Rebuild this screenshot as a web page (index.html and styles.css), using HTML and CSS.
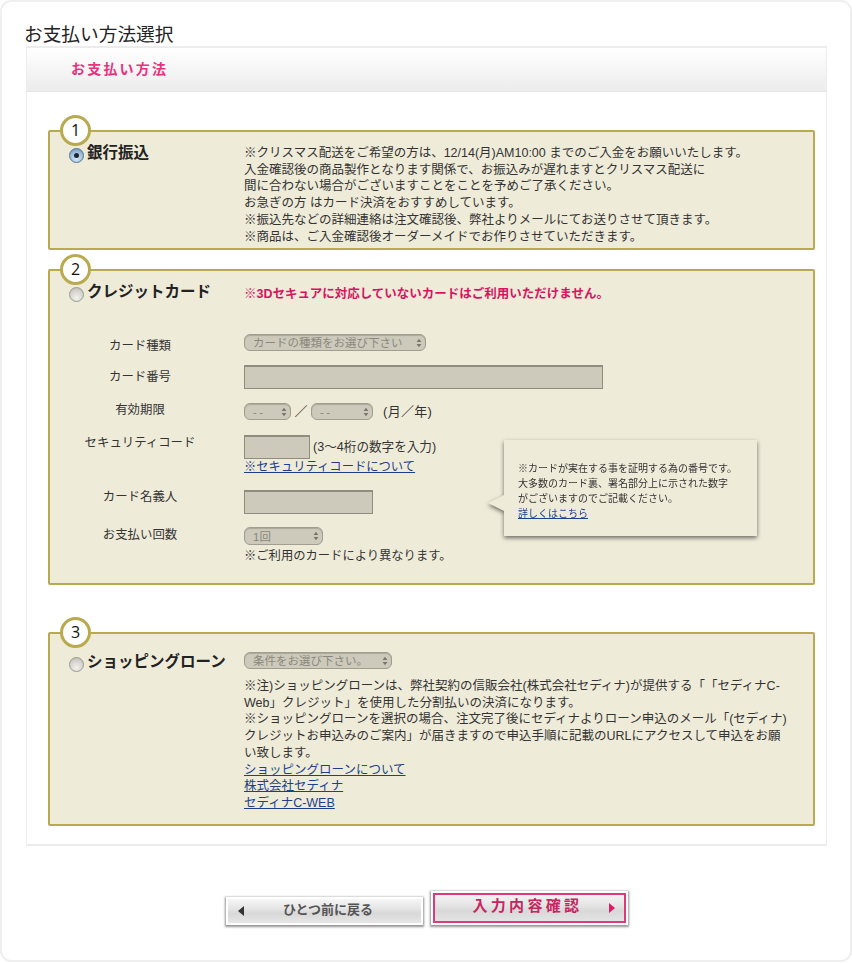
FILE: index.html
```html
<!DOCTYPE html>
<html lang="ja">
<head>
<meta charset="utf-8">
<title>お支払い方法選択</title>
<link rel="stylesheet" href="styles.css">
</head>
<body>
<main class="card">
  <h1 class="title">お支払い方法選択</h1>
  <section class="panel">
    <h2 class="panel-head">お支払い方法</h2>
    <div class="panel-body">

      <div class="box box-bank">
        <span class="num">1</span>
        <div class="head"><span class="radio radio-on"></span><span class="method">銀行振込</span></div>
        <p class="copy">※クリスマス配送をご希望の方は、12/14(月)AM10:00 までのご入金をお願いいたします。<br>入金確認後の商品製作となります関係で、お振込みが遅れますとクリスマス配送に<br>間に合わない場合がございますことをことを予めご了承ください。<br>お急ぎの方 はカード決済をおすすめしています。<br>※振込先などの詳細連絡は注文確認後、弊社よりメールにてお送りさせて頂きます。<br>※商品は、ご入金確認後オーダーメイドでお作りさせていただきます。</p>
      </div>

      <div class="box box-card">
        <span class="num">2</span>
        <div class="card-top">
          <div class="head"><span class="radio"></span><span class="method">クレジットカード</span></div>
          <p class="warn">※3Dセキュアに対応していないカードはご利用いただけません。</p>
        </div>
        <div class="form">
          <div class="label label-type">カード種類</div>
          <div class="ctl"><span class="sel sel-type"><span>カードの種類をお選び下さい</span><svg class="updown" viewBox="0 0 7 11"><path d="M3.5 0.5 6.3 4.2H.7zM3.5 10.5 .7 6.8h5.6z"/></svg></span></div>
          <div class="label label-number">カード番号</div>
          <div class="ctl"><input class="field field-number" disabled></div>
          <div class="label label-date">有効期限</div>
          <div class="ctl ctl-date"><span class="sel sel-month"><span class="dash">--</span><svg class="updown" viewBox="0 0 7 11"><path d="M3.5 0.5 6.3 4.2H.7zM3.5 10.5 .7 6.8h5.6z"/></svg></span><span class="slash">／</span><span class="sel sel-year"><span class="dash">--</span><svg class="updown" viewBox="0 0 7 11"><path d="M3.5 0.5 6.3 4.2H.7zM3.5 10.5 .7 6.8h5.6z"/></svg></span><span class="date-note">(月／年)</span></div>
          <div class="label label-sec">セキュリティコード</div>
          <div class="ctl ctl-sec"><div class="sec-line"><input class="field field-sec" disabled><span class="sec-note">(3〜4桁の数字を入力)</span></div><a class="link" href="#">※セキュリティコードについて</a></div>
          <div class="label label-name">カード名義人</div>
          <div class="ctl ctl-name"><input class="field field-name" disabled></div>
          <div class="label label-times">お支払い回数</div>
          <div class="ctl ctl-times"><span class="sel sel-times"><span>1回</span><svg class="updown" viewBox="0 0 7 11"><path d="M3.5 0.5 6.3 4.2H.7zM3.5 10.5 .7 6.8h5.6z"/></svg></span><p class="times-note">※ご利用のカードにより異なります。</p></div>
        </div>
        <aside class="tip">※カードが実在する事を証明する為の番号です。<br>大多数のカード裏、署名部分上に示された数字<br>がございますのでご記載ください。<br><a class="link" href="#">詳しくはこちら</a></aside>
      </div>

      <div class="box box-loan">
        <span class="num">3</span>
        <div class="head"><span class="radio"></span><span class="method">ショッピングローン</span></div>
        <div class="loan-main">
          <span class="sel sel-loan"><span>条件をお選び下さい。</span><svg class="updown" viewBox="0 0 7 11"><path d="M3.5 0.5 6.3 4.2H.7zM3.5 10.5 .7 6.8h5.6z"/></svg></span>
          <p class="copy copy-loan">※注)ショッピングローンは、弊社契約の信販会社(株式会社セディナ)が提供する「「セディナC-<br>Web」クレジット」を使用した分割払いの決済になります。<br>※ショッピングローンを選択の場合、注文完了後にセディナよりローン申込のメール「(セディナ)<br>クレジットお申込みのご案内」が届きますので申込手順に記載のURLにアクセスして申込をお願<br>い致します。<br><a class="link" href="#">ショッピングローンについて</a><br><a class="link" href="#">株式会社セディナ</a><br><a class="link" href="#">セディナC-WEB</a></p>
        </div>
      </div>

    </div>
  </section>
  <div class="actions">
    <button class="btn btn-back" type="button"><svg class="tri" viewBox="0 0 6 10"><path d="M6 0V10L0 5z"/></svg><span class="btn-text">ひとつ前に戻る</span></button>
    <button class="btn btn-next" type="button"><span class="btn-text">入力内容確認</span><svg class="tri" viewBox="0 0 6 10"><path d="M0 0V10L6 5z"/></svg></button>
  </div>
</main>
</body>
</html>
```

FILE: styles.css
```css
* { box-sizing: border-box; }
html, body { margin: 0; padding: 0; background: #fff; }
body {
  width: 852px;
  height: 963px;
  overflow: hidden;
  font-family: "Liberation Sans", "Noto Sans CJK JP", sans-serif;
  color: #333;
  text-spacing-trim: space-all;
}
.card {
  width: 852px;
  height: 962px;
  border: 2px solid #efefef;
  border-radius: 11px;
  padding: 21px 23px 0 24px;
  background: #fff;
}
.title {
  margin: 0 0 0 -2px;
  height: 23px;
  font-family: "Liberation Serif", "Noto Sans CJK JP", serif;
  font-weight: 400;
  font-size: 18.7px;
  line-height: 23px;
  color: #222;
}
.panel {
  width: 801px;
  border: 2px solid #ececec;
  border-width: 2px 1px 2px 1px;
  background: #fff;
}
.panel-head {
  margin: 0;
  height: 44px;
  padding-left: 44px;
  font-size: 14px;
  letter-spacing: 2.2px;
  line-height: 43px;
  font-weight: 700;
  color: #e8327e;
  background: linear-gradient(#fff, #ececec);
  border-bottom: 1px solid #e6e6e6;
}
.panel-body { padding: 38px 11px 18px 21px; }
.box {
  position: relative;
  width: 767px;
  border: 2px solid #b9a94f;
  border-radius: 2px;
  background: #efebd9;
}
.box-bank { display: flex; height: 120px; }
.box-card { margin-top: 19px; height: 316px; }
.box-loan { margin-top: 47px; height: 194px; display: flex; }
.num {
  position: absolute;
  left: 10px;
  top: -17px;
  width: 31px;
  height: 31px;
  border: 3px solid #b9a94f;
  border-radius: 50%;
  background: #fff;
  font-family: "Open Sans", sans-serif;
  font-size: 16px;
  line-height: 25px;
  text-align: center;
  color: #111;
}
.head {
  flex: none;
  width: 194px;
  display: flex;
  align-items: flex-start;
  gap: 3px;
  padding: 11px 0 0 19px;
}
.box-loan .head { padding-top: 18px; }
.radio {
  flex: none;
  width: 15px;
  height: 15px;
  margin-top: 5px;
  border-radius: 50%;
  border: 1px solid #9a9a92;
  background: radial-gradient(circle at 50% 75%, #f2f2ee 0%, #d6d5cf 55%, #b5b4ae 100%);
  position: relative;
}
.radio-on {
  border-color: #56738f;
  background: radial-gradient(circle at 50% 75%, #d3e8f8 0%, #9cc0de 55%, #6488a8 100%);
}
.radio-on::after {
  content: "";
  position: absolute;
  left: 4px;
  top: 4px;
  width: 5px;
  height: 5px;
  border-radius: 50%;
  background: #20262c;
}
.method {
  font-size: 15.5px;
  font-weight: 700;
  line-height: 20px;
  color: #222;
  white-space: nowrap;
}
.copy {
  margin: 0;
  padding-top: 13px;
  font-size: 12.5px;
  line-height: 16.7px;
  white-space: nowrap;
}
.card-top { display: flex; height: 63px; }
.warn {
  margin: 0;
  padding-top: 15px;
  font-size: 12.5px;
  line-height: 17px;
  font-weight: 700;
  color: #d6145f;
}
.form {
  display: grid;
  grid-template-columns: 180px 1fr;
  grid-template-rows: 31px 36px 33px 55px 37px auto;
  column-gap: 14px;
  align-items: start;
}
.label {
  text-align: center;
  font-size: 12.4px;
  line-height: 17px;
  color: #333;
}
.label-type { padding-top: 4px; }
.label-number { padding-top: 4px; }
.label-date { padding-top: 1px; }
.label-sec { padding-top: 1px; }
.label-name { padding-top: 0; }
.label-times { padding-top: 1px; }
.ctl { font-size: 12.5px; line-height: 17px; }
.ctl-date { display: flex; align-items: center; padding-top: 2px; }
.sel {
  display: inline-flex;
  align-items: center;
  justify-content: space-between;
  height: 17px;
  padding: 2px 3px 0 8px;
  border: 1px solid #a09e90;
  border-radius: 6px;
  background: #cdcabb;
  box-shadow: inset 0 1px 1px #aaa89a;
  font-size: 11.5px;
  line-height: 15px;
  color: #8a887c;
  white-space: nowrap;
  vertical-align: top;
}
.updown { width: 6px; height: 10px; margin-top: -2px; fill: #77766c; flex: none; }
.dash { letter-spacing: 2.5px; }
.sel-type { width: 182px; }
.sel-month { width: 47px; }
.sel-year { width: 62px; }
.sel-times { width: 79px; height: 18px; }
.sel-loan { width: 148px; }
.slash { width: 20px; text-align: center; font-size: 13px; }
.date-note { margin-left: 10px; font-size: 13px; letter-spacing: .3px; }
.field {
  display: block;
  margin: 0;
  padding: 0;
  height: 24px;
  border: 1px solid #8f8d80;
  border-top-width: 2px;
  background: #cdcabb;
}
.field-number { width: 359px; }
.field-sec { width: 66px; flex: none; }
.field-name { width: 129px; }
.ctl-sec { padding-top: 1px; }
.ctl-name { padding-top: 1px; }
.ctl-times { padding-top: 1px; }
.sec-line { display: flex; align-items: center; gap: 3px; font-size: 12.6px; }
.sec-note { color: #333; }
.link { color: #1d3f8c; text-decoration: underline; }
.ctl-sec .link { display: block; font-size: 12.3px; }
.times-note { margin: 3px 0 0; white-space: nowrap; font-size: 12.3px; line-height: 17px; }
.tip {
  position: absolute;
  left: 454px;
  top: 169px;
  width: 253px;
  height: 96px;
  padding: 21px 0 0 14px;
  background: #efebd9;
  font-size: 10px;
  line-height: 15px;
  white-space: nowrap;
  filter: drop-shadow(0 2px 2px rgba(0, 0, 0, .55));
}
.tip::before {
  content: "";
  position: absolute;
  left: -16px;
  top: 55px;
  border-style: solid;
  border-width: 8px 16px 8px 0;
  border-color: transparent #efebd9 transparent transparent;
}
.loan-main { padding-top: 18px; }
.copy-loan { padding-top: 8px; }
.actions {
  display: flex;
  justify-content: center;
  align-items: flex-end;
  gap: 8px;
  margin-top: 45px;
}
.btn {
  display: flex;
  align-items: center;
  width: 197px;
  margin: 0;
  font-family: inherit;
  font-weight: 700;
  border: 2px solid #fff;
  background: linear-gradient(#f6f6f6, #e6e5e5 40%, #d9d8d8 60%, #e6e6e6);
  box-shadow: 0 1px 2px 1px rgba(60, 60, 60, .55);
  cursor: default;
}
.btn-back {
  height: 28px;
  padding: 0 0 0 10px;
  color: #555;
  font-size: 13px;
}
.btn-back .btn-text { flex: 1; text-align: center; padding: 0 8px 3px 0; line-height: 16px; }
.btn-back .tri { width: 6px; height: 10px; fill: #333; flex: none; }
.btn-next {
  height: 34px;
  padding: 0 11px 0 40px;
  color: #c4275f;
  font-size: 15px;
  letter-spacing: 3.3px;
  outline: 2px solid #df3a78;
  outline-offset: -4px;
}
.btn-next .btn-text { flex: 1; text-align: left; padding-bottom: 5px; line-height: 18px; }
.btn-next .tri { width: 6px; height: 10px; fill: #e01a66; flex: none; }
```
